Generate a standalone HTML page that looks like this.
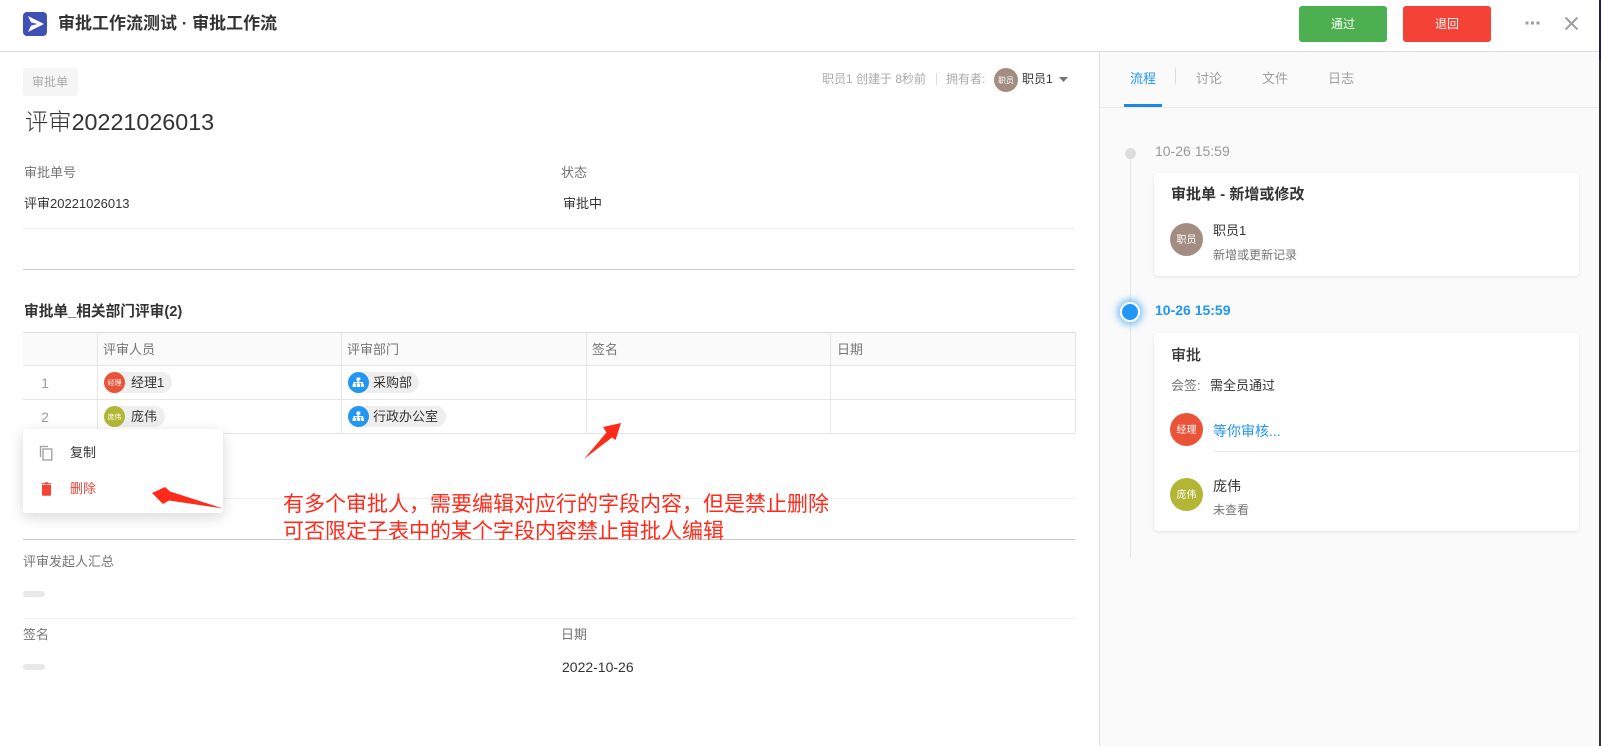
<!DOCTYPE html>
<html lang="zh-CN">
<head>
<meta charset="utf-8">
<title>审批工作流测试 · 审批工作流</title>
<style>
html,body{margin:0;padding:0;background:#fff;width:1601px;height:746px;overflow:hidden}
body{position:relative;font-family:"Liberation Sans","Noto Sans CJK SC",sans-serif;color:#333}
.a{position:absolute}
.t{position:absolute;line-height:20px;height:20px;white-space:nowrap;font-size:13px}
.lbl{color:#757575}
.b{font-weight:700}
.ln{position:absolute;height:1px}
.av{position:absolute;border-radius:50%;color:#fff;display:flex;align-items:center;justify-content:center;white-space:nowrap;line-height:1;box-sizing:border-box}
.chip{position:absolute;height:21px;background:#eee;border-radius:11px}
.card{position:absolute;left:1154px;width:425px;background:#fff;border-radius:4px;box-shadow:0 1px 3px rgba(0,0,0,.1)}
.btn{position:absolute;top:6px;width:88px;height:36px;border-radius:3px;color:#fff;font-size:12px;line-height:36px;text-align:center}
.tab{position:absolute;top:69px;font-size:13px;line-height:20px;color:#9e9e9e}
.v{position:absolute;width:1px;background:#e6e6e6}
</style>
</head>
<body>
<!-- header -->
<svg class="a" style="left:23px;top:12px" width="24" height="24" viewBox="0 0 24 24"><rect width="24" height="24" rx="4" fill="#3f51b5"/><path d="M5 4L21 12L5 20L8 13.600L14.500 12L8 10.400Z" fill="#fff"/></svg>
<div class="t b" style="left:58px;top:14px;font-size:17px;color:#333">审批工作流测试 · 审批工作流</div>
<div class="btn" style="left:1299px;background:#4caf50">通过</div>
<div class="btn" style="left:1403px;background:#f44336">退回</div>
<svg class="a" style="left:1525px;top:20px" width="15" height="6" viewBox="0 0 15 6"><rect x="0.500" y="1.500" width="3" height="3" fill="#9e9e9e"/><rect x="6" y="1.500" width="3" height="3" fill="#9e9e9e"/><rect x="11.500" y="1.500" width="3" height="3" fill="#9e9e9e"/></svg>
<svg class="a" style="left:1564px;top:16px" width="15" height="15" viewBox="0 0 15 15"><path d="M1.500 1.500L13.500 13.500M13.500 1.500L1.500 13.500" stroke="#9e9e9e" stroke-width="2" fill="none"/></svg>
<div class="ln" style="left:0;top:51px;width:1599px;background:#ddd"></div>

<!-- right panel -->
<div class="a" style="left:1099px;top:52px;width:500px;height:694px;background:#fafafa;border-left:1px solid #ddd;box-sizing:border-box"></div>
<div class="ln" style="left:1100px;top:107px;width:499px;background:#e8e8e8"></div>
<div class="a" style="left:1124px;top:104px;width:38px;height:3px;background:#1e88e5"></div>
<div class="a" style="left:1175px;top:68px;width:1px;height:16px;background:#ddd"></div>
<div class="tab" style="left:1130px;color:#2196f3">流程</div>
<div class="tab" style="left:1196px">讨论</div>
<div class="tab" style="left:1262px">文件</div>
<div class="tab" style="left:1328px">日志</div>

<!-- timeline -->
<div class="a" style="left:1130px;top:155px;width:1px;height:403px;background:#e5e5e5"></div>
<div class="a" style="left:1125px;top:148px;width:11px;height:11px;border-radius:50%;background:#ddd"></div>
<div class="t" style="left:1155px;top:141px;font-size:14px;color:#999">10-26 15:59</div>
<div class="card" style="top:173px;height:103px"></div>
<div class="t b" style="left:1171px;top:185px;font-size:15px">审批单 - 新增或修改</div>
<div class="av" style="left:1170px;top:223px;width:33px;height:33px;background:#a38d83;font-size:10px;padding-top:3px">职员</div>
<div class="t" style="left:1213px;top:221px;font-size:13px">职员1</div>
<div class="t lbl" style="left:1213px;top:245px;font-size:12px">新增或更新记录</div>

<div class="a" style="left:1120px;top:302px;width:16px;height:16px;border-radius:50%;background:#2196f3;border:2px solid #fff;box-shadow:0 0 7px 3px rgba(33,150,243,.55)"></div>
<div class="t b" style="left:1155px;top:300px;font-size:14px;color:#2196f3">10-26 15:59</div>
<div class="card" style="top:333px;height:198px"></div>
<div class="t" style="left:1171px;top:346px;font-size:15px;font-weight:500">审批</div>
<div class="t lbl" style="left:1171px;top:376px">会签:</div>
<div class="t" style="left:1210px;top:376px">需全员通过</div>
<div class="av" style="left:1170px;top:413px;width:33px;height:33px;background:#eb5339;font-size:10px;padding-top:3px">经理</div>
<div class="t" style="left:1213px;top:421px;font-size:14px;color:#2196f3">等你审核...</div>
<div class="ln" style="left:1213px;top:451px;width:366px;background:#e8e8e8"></div>
<div class="av" style="left:1170px;top:478px;width:33px;height:33px;background:#b3b535;font-size:10px;padding-top:3px">庞伟</div>
<div class="t" style="left:1213px;top:476px;font-size:14px">庞伟</div>
<div class="t lbl" style="left:1213px;top:500px;font-size:12px">未查看</div>

<!-- left meta -->
<div class="a" style="left:23px;top:68px;width:55px;height:28px;background:#f5f5f5;border-radius:3px"></div>
<div class="t" style="left:32px;top:72px;font-size:12px;color:#aaa">审批单</div>
<div class="t" style="left:822px;top:69px;font-size:12px;color:#aaa">职员1 创建于 8秒前</div>
<div class="a" style="left:936px;top:73px;width:1px;height:12px;background:#ddd"></div>
<div class="t" style="left:946px;top:69px;font-size:12px;color:#aaa">拥有者:</div>
<div class="av" style="left:994px;top:68px;width:24px;height:24px;background:#a38d83;font-size:8px;padding-top:2px">职员</div>
<div class="t" style="left:1022px;top:69px;font-size:12px">职员1</div>
<svg class="a" style="left:1059px;top:77px" width="9" height="5" viewBox="0 0 9 5"><path d="M0 0H9L4.500 5Z" fill="#757575"/></svg>

<div class="t" style="left:25px;top:110px;font-size:23.300px;color:#333;font-weight:300;line-height:24px;height:24px">评审20221026013</div>
<div class="t lbl" style="left:24px;top:163px">审批单号</div>
<div class="t lbl" style="left:561px;top:163px">状态</div>
<div class="t" style="left:24px;top:194px">评审20221026013</div>
<div class="t" style="left:563px;top:194px">审批中</div>
<div class="ln" style="left:23px;top:228px;width:1052px;background:#f0f0f0"></div>
<div class="ln" style="left:23px;top:269px;width:1052px;background:#ccc"></div>

<div class="t b" style="left:24px;top:302px;font-size:14.700px">审批单_相关部门评审(2)</div>

<!-- table -->
<div class="a" style="left:23px;top:332px;width:1052px;height:33px;background:#fafafa"></div>
<div class="ln" style="left:23px;top:332px;width:1052px;background:#ddd"></div>
<div class="ln" style="left:23px;top:365px;width:1052px;background:#e6e6e6"></div>
<div class="ln" style="left:23px;top:399px;width:1052px;background:#e6e6e6"></div>
<div class="ln" style="left:23px;top:433px;width:1052px;background:#e6e6e6"></div>
<div class="v" style="left:97px;top:332px;height:101px"></div>
<div class="v" style="left:341px;top:332px;height:101px"></div>
<div class="v" style="left:586px;top:332px;height:101px"></div>
<div class="v" style="left:830px;top:332px;height:101px"></div>
<div class="v" style="left:1075px;top:332px;height:101px"></div>
<div class="t lbl" style="left:103px;top:340px">评审人员</div>
<div class="t lbl" style="left:347px;top:340px">评审部门</div>
<div class="t lbl" style="left:592px;top:340px">签名</div>
<div class="t lbl" style="left:837px;top:340px">日期</div>
<div class="t" style="left:41px;top:373px;width:8px;text-align:center;font-size:14px;color:#9e9e9e">1</div>
<div class="t" style="left:41px;top:407px;width:8px;text-align:center;font-size:14px;color:#9e9e9e">2</div>

<div class="chip" style="left:104px;top:372px;width:68px"></div>
<div class="av" style="left:104px;top:372px;width:21px;height:21px;background:#eb5339;font-size:7px;padding-top:2px">经理</div>
<div class="t" style="left:131px;top:373px">经理1</div>
<div class="chip" style="left:104px;top:406px;width:61px"></div>
<div class="av" style="left:104px;top:406px;width:21px;height:21px;background:#b3b535;font-size:7px;padding-top:2px">庞伟</div>
<div class="t" style="left:131px;top:407px">庞伟</div>

<div class="chip" style="left:348px;top:372px;width:71px"></div>
<svg class="a" style="left:348px;top:372px" width="21" height="21" viewBox="0 0 21 21"><circle cx="10.500" cy="10.500" r="10.500" fill="#2196f3"/><path d="M8.700 5.500h3.600v3h-1.200v1.500h4.100v2h0.800v3h-3.200v-3h0.800v-0.800h-2.500v0.800h0.800v3h-3.200v-3h0.800v-0.800h-2.500v0.800h0.800v3h-3.200v-3h0.800v-2h4.100v-1.500h-1.200z" fill="#fff"/></svg>
<div class="t" style="left:373px;top:373px">采购部</div>
<div class="chip" style="left:348px;top:406px;width:98px"></div>
<svg class="a" style="left:348px;top:406px" width="21" height="21" viewBox="0 0 21 21"><circle cx="10.500" cy="10.500" r="10.500" fill="#2196f3"/><path d="M8.700 5.500h3.600v3h-1.200v1.500h4.100v2h0.800v3h-3.200v-3h0.800v-0.800h-2.500v0.800h0.800v3h-3.200v-3h0.800v-0.800h-2.500v0.800h0.800v3h-3.200v-3h0.800v-2h4.100v-1.500h-1.200z" fill="#fff"/></svg>
<div class="t" style="left:373px;top:407px">行政办公室</div>

<!-- lower fields -->
<div class="ln" style="left:23px;top:498px;width:1052px;background:#f0f0f0"></div>
<div class="ln" style="left:23px;top:539px;width:1052px;background:#ccc"></div>
<div class="t lbl" style="left:23px;top:552px">评审发起人汇总</div>
<div class="a" style="left:23px;top:591px;width:22px;height:6px;background:#e8e8e8;border-radius:3px"></div>
<div class="ln" style="left:23px;top:618px;width:1052px;background:#f0f0f0"></div>
<div class="t lbl" style="left:23px;top:625px">签名</div>
<div class="t lbl" style="left:561px;top:625px">日期</div>
<div class="a" style="left:23px;top:664px;width:22px;height:6px;background:#e8e8e8;border-radius:3px"></div>
<div class="t" style="left:562px;top:657px;font-size:14px">2022-10-26</div>

<!-- popup menu -->
<div class="a" style="left:23px;top:429px;width:200px;height:84px;background:#fff;border-radius:3px;box-shadow:0 4px 14px rgba(0,0,0,.16)"></div>
<svg class="a" style="left:39px;top:445px" width="14" height="16" viewBox="0 0 14 16"><path d="M1.500 12V1.500H9" stroke="#9e9e9e" stroke-width="1.300" fill="none"/><rect x="4" y="4" width="8.800" height="11" stroke="#9e9e9e" stroke-width="1.300" fill="none"/></svg>
<div class="t" style="left:70px;top:443px;font-size:13px">复制</div>
<svg class="a" style="left:41px;top:481px" width="11" height="15" viewBox="0 0 11 15"><path d="M1 4h9v9.500a1.300 1.300 0 0 1-1.300 1.300H2.300A1.300 1.300 0 0 1 1 13.500z M0.500 2.200h3l0.800-1h2.400l0.800 1h3v1.200h-10z" fill="#f44336"/></svg>
<div class="t" style="left:70px;top:479px;font-size:13px;color:#f44336">删除</div>

<!-- annotations -->
<svg class="a" style="left:0;top:0" width="1601" height="746" viewBox="0 0 1601 746">
<path d="M152 493L165 487L170 491.500L223 508.500L169 500.500L163 504Z" fill="#ff2a1a"/>
<path d="M621 423L603 427L606.500 432.500L584 459L612 437.500L615.600 440Z" fill="#ff2a1a"/>
</svg>
<div class="a" style="left:283px;top:491px;font-size:21px;line-height:27px;color:#ff2a1a;white-space:nowrap">有多个审批人&#xFF0C;需要编辑对应行的字段内容&#xFF0C;但是禁止删除<br>可否限定子表中的某个字段内容禁止审批人编辑</div>

<!-- right edge strip -->
<div class="a" style="left:1599px;top:0;width:2px;height:746px;background:#333"></div>
<div class="a" style="left:1599px;top:0;width:2px;height:60px;background:#20223a"></div>
</body>
</html>
